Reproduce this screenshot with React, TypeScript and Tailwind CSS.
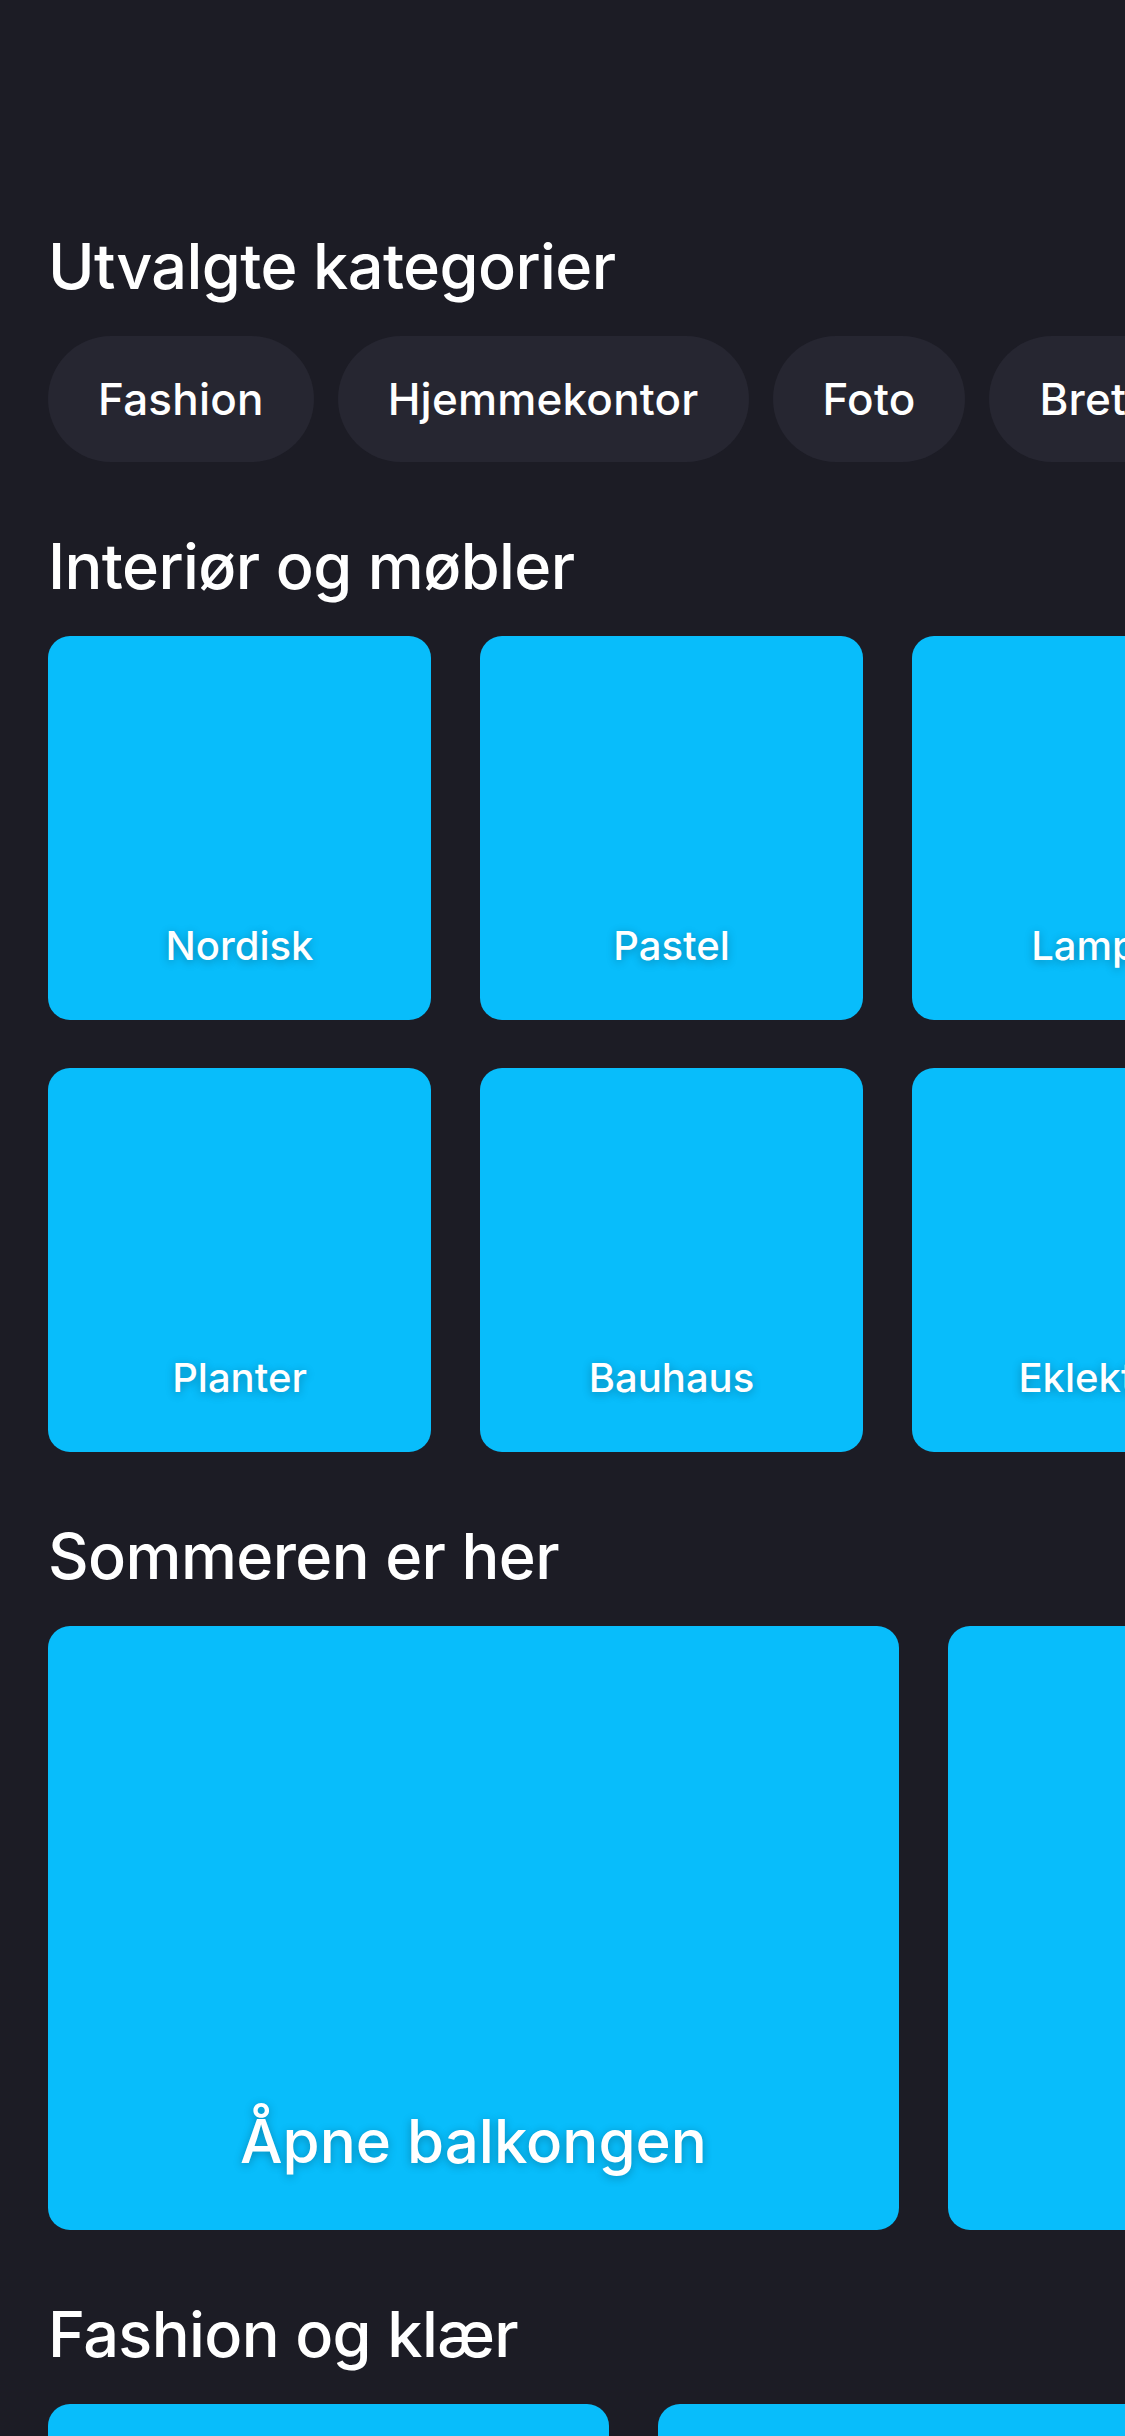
const chips = ["Fashion", "Hjemmekontor", "Foto", "Bretting", "Reise"];

const interiorRows = [
  ["Nordisk", "Pastel", "Lamper"],
  ["Planter", "Bauhaus", "Eklektisk"],
];

const summer = ["Åpne balkongen", "Hagefest"];

const fashion = ["Sko", "Vesker"];

const SectionTitle = ({ children, first }: { children: string; first?: boolean }) => (
  <h2
    className={`pl-[48px] text-[63px] leading-[76px] font-medium text-white tracking-[-0.6px] ${
      first ? "mt-[228px]" : "mt-[66px]"
    } mb-[32px]`}
  >
    {children}
  </h2>
);

const Tile = ({ label, className, textClass }: { label: string; className: string; textClass: string }) => (
  <div
    className={`shrink-0 rounded-[22px] bg-[#08bdfb] flex flex-col items-center justify-end ${className}`}
  >
    <span className={`text-white font-medium whitespace-nowrap [text-shadow:0_2px_10px_rgba(0,0,0,0.28)] ${textClass}`}>
      {label}
    </span>
  </div>
);

export default function App() {
  return (
    <div
      className="w-[1125px] h-[2436px] overflow-hidden bg-[#1c1c25]"
      style={{ fontFamily: "Inter, 'Noto Sans', sans-serif" }}
    >
      <SectionTitle first>Utvalgte kategorier</SectionTitle>
      <div className="flex gap-[24px] pl-[48px] overflow-hidden">
        {chips.map((c) => (
          <div
            key={c}
            className="shrink-0 h-[126px] px-[50px] rounded-full bg-[#262631] flex items-center text-white text-[44px] font-medium tracking-[0.2px]"
          >
            {c}
          </div>
        ))}
      </div>

      <SectionTitle>Interiør og møbler</SectionTitle>
      <div className="flex flex-col gap-[48px]">
        {interiorRows.map((row, i) => (
          <div key={i} className="flex gap-[49px] pl-[48px] overflow-hidden">
            {row.map((l) => (
              <Tile key={l} label={l} className="w-[383px] h-[384px] pb-[50px]" textClass="text-[40px] leading-[48px]" />
            ))}
          </div>
        ))}
      </div>

      <SectionTitle>Sommeren er her</SectionTitle>
      <div className="flex gap-[49px] pl-[48px] overflow-hidden">
        {summer.map((l, i) => (
          <Tile
            key={l}
            label={i === 0 ? l : ""}
            className="w-[851px] h-[604px] pb-[53px]"
            textClass="text-[60px] leading-[72px]"
          />
        ))}
      </div>

      <SectionTitle>Fashion og klær</SectionTitle>
      <div className="flex gap-[49px] pl-[48px] overflow-hidden">
        {fashion.map((l) => (
          <Tile key={l} label="" className="w-[561px] h-[561px]" textClass="text-[41px]" />
        ))}
      </div>
    </div>
  );
}
